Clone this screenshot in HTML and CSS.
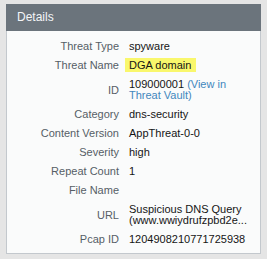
FILE: index.html
```html
<!DOCTYPE html>
<html lang="en">
<head>
  <meta charset="UTF-8" />
  <title>Details</title>
  <link rel="stylesheet" href="styles.css">
</head>
<body>
  <div class="panel">
    <div class="panel-header">Details</div>
    <div class="panel-body">
      <div class="details">
        <div class="label">Threat Type</div>
        <div class="value">spyware</div>

        <div class="label">Threat Name</div>
        <div class="value"><span class="highlight">DGA domain</span></div>

        <div class="label">ID</div>
        <div class="value">109000001 <a href="#" class="vault-link">(View in Threat Vault)</a></div>

        <div class="label">Category</div>
        <div class="value">dns-security</div>

        <div class="label">Content Version</div>
        <div class="value">AppThreat-0-0</div>

        <div class="label">Severity</div>
        <div class="value">high</div>

        <div class="label">Repeat Count</div>
        <div class="value">1</div>

        <div class="label">File Name</div>
        <div class="value"></div>

        <div class="label">URL</div>
        <div class="value">Suspicious DNS Query (www.wwiydrufzpbd2e...</div>

        <div class="label">Pcap ID</div>
        <div class="value">1204908210771725938</div>
      </div>
    </div>
  </div>
</body>
</html>
```

FILE: styles.css
```css
body {
  margin: 0;
  padding: 4px 6px;
  background-color: #e5e5e5;
  font-family: 'Liberation Sans', Arial, sans-serif;
  font-size: 11px;
}
.panel {
  width: 255px;
}
.panel-header {
  height: 27px;
  line-height: 27px;
  padding-left: 11px;
  background-color: #6b747c;
  color: #f4f6f8;
  font-size: 12px;
}
.panel-body {
  background-color: #fafbfb;
  border: 1px solid #c3c8cd;
  border-top: none;
  padding: 6px 0 4px;
}
.details {
  display: grid;
  grid-template-columns: 112px 1fr;
  column-gap: 10px;
  align-items: center;
  line-height: 11px;
}
.label,
.value {
  padding: 4px 0;
  min-height: 11px;
}
.label {
  text-align: right;
  color: #565e66;
}
.value {
  color: #151515;
  padding-right: 6px;
}
.highlight {
  display: inline-block;
  background-color: #f9f76c;
  padding: 0 5px 0 4px;
  margin: -2px 0 -2px -4px;
  line-height: 14px;
  height: 14px;
}
.vault-link {
  color: #4287bd;
  text-decoration: none;
}
```
